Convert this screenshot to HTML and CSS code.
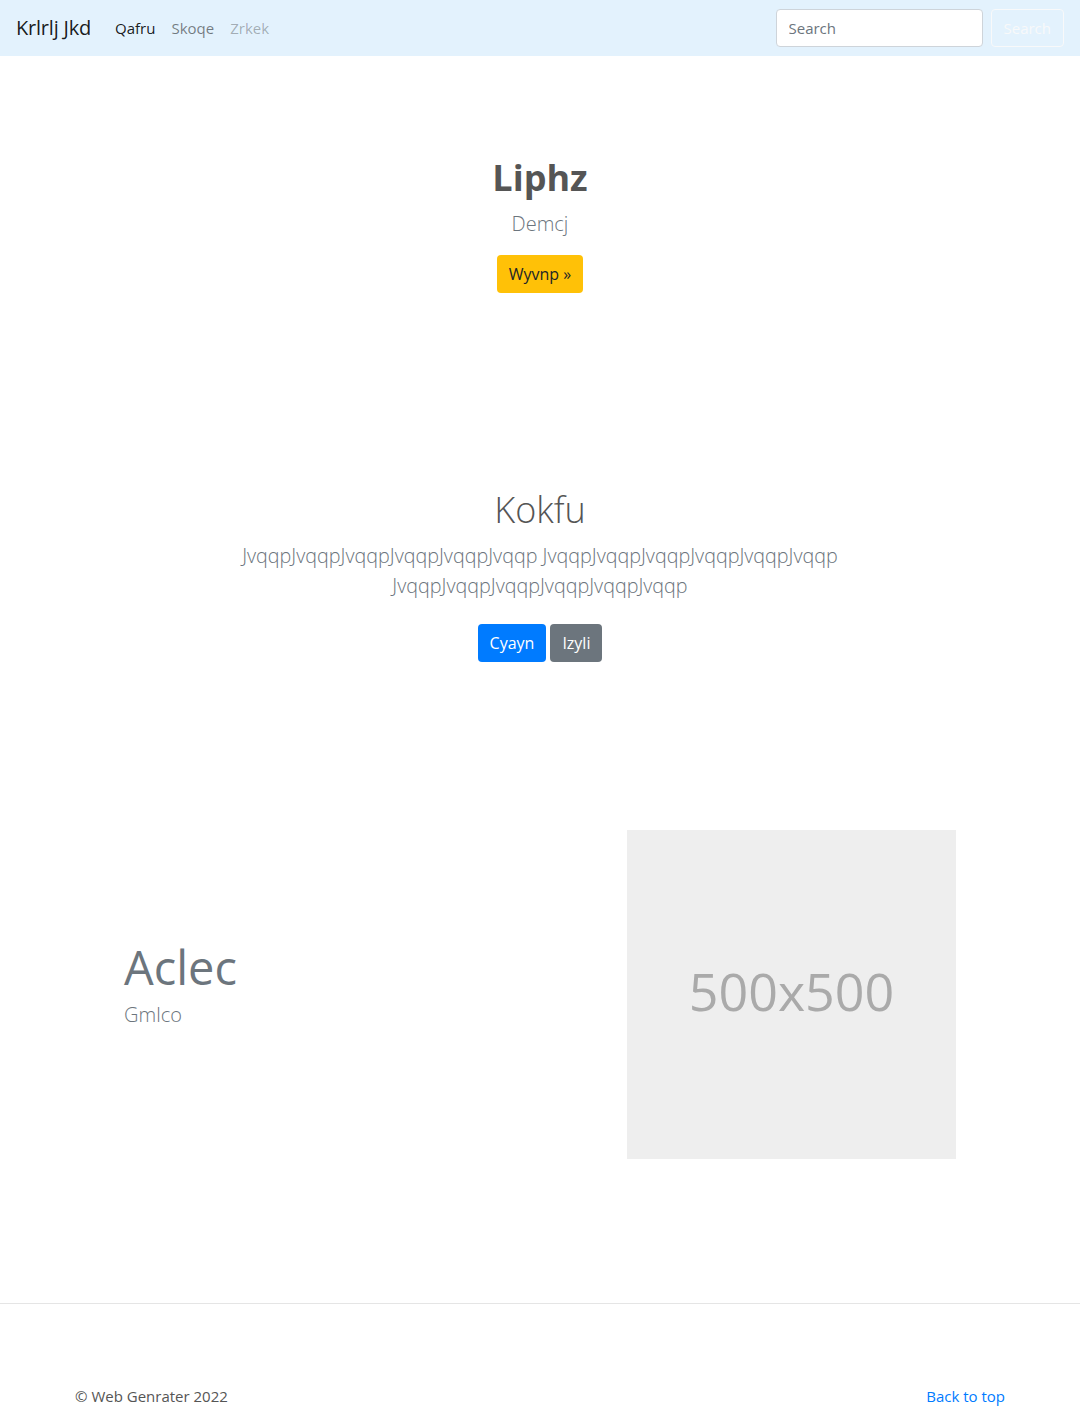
FILE: index.html
```html
<!DOCTYPE html>
<html lang="en">
<head>
<meta charset="utf-8">
<title>Krlrlj Jkd</title>
<link rel="stylesheet" href="styles.css">
</head>
<body>
<nav class="navbar">
  <a class="brand" href="#">Krlrlj Jkd</a>
  <ul class="nav">
    <li><a class="nav-link active" href="#">Qafru</a></li>
    <li><a class="nav-link" href="#">Skoqe</a></li>
    <li><a class="nav-link disabled" href="#">Zrkek</a></li>
  </ul>
  <form class="search">
    <input class="search-input" type="text" placeholder="Search">
    <button class="search-btn" type="button">Search</button>
  </form>
</nav>

<main>
  <section class="hero">
    <h1 class="hero-title">Liphz</h1>
    <p class="lead hero-lead">Demcj</p>
    <a class="btn btn-warning" href="#">Wyvnp »</a>
  </section>

  <section class="intro">
    <h2 class="intro-title">Kokfu</h2>
    <p class="lead intro-lead">JvqqpJvqqpJvqqpJvqqpJvqqpJvqqp JvqqpJvqqpJvqqpJvqqpJvqqpJvqqp JvqqpJvqqpJvqqpJvqqpJvqqpJvqqp</p>
    <div class="btn-row">
      <a class="btn btn-primary" href="#">Cyayn</a>
      <a class="btn btn-secondary" href="#">Izyli</a>
    </div>
  </section>

  <section class="feature">
    <div class="feature-text">
      <h2 class="feature-title">Aclec</h2>
      <p class="lead feature-lead">Gmlco</p>
    </div>
    <div class="feature-media">
      <div class="placeholder">500x500</div>
    </div>
  </section>
</main>

<footer class="footer">
  <div class="footer-inner">
    <span class="copy">© Web Genrater 2022</span>
    <a class="top-link" href="#">Back to top</a>
  </div>
</footer>
</body>
</html>
```

FILE: styles.css
```css
* { box-sizing: border-box; }

html, body {
  margin: 0;
  padding: 0;
}

body {
  font-family: "Open Sans", "Noto Sans", "Liberation Sans", sans-serif;
  font-size: 15px;
  line-height: 1.5;
  color: #212529;
  background: #fff;
}

a { text-decoration: none; }

/* Navbar */
.navbar {
  height: 56px;
  background: #e3f2fd;
  display: flex;
  align-items: center;
  padding: 0 16px;
}

.brand {
  font-size: 20px;
  color: rgba(0, 0, 0, 0.9);
  margin-right: 16px;
  letter-spacing: -0.2px;
}

.nav {
  list-style: none;
  margin: 0;
  padding: 0;
  display: flex;
  flex: 1;
}

.nav-link {
  display: block;
  padding: 8px;
  font-size: 15px;
  color: rgba(0, 0, 0, 0.5);
}

.nav-link.active { color: rgba(0, 0, 0, 0.9); }
.nav-link.disabled { color: rgba(0, 0, 0, 0.3); }

.search {
  display: flex;
  align-items: center;
  gap: 8px;
}

.search-input {
  width: 207px;
  height: 38px;
  border: 1px solid #ced4da;
  border-radius: 4px;
  padding: 6px 12px;
  font-family: inherit;
  font-size: 15px;
  color: #495057;
  background: #fff;
}

.search-input::placeholder { color: #6c757d; }

.search-btn {
  height: 38px;
  padding: 6px 12px;
  border: 1px solid #f8f9fa;
  border-radius: 4px;
  background: transparent;
  color: #f8f9fa;
  font-family: inherit;
  font-size: 15px;
}

/* Buttons */
.btn {
  display: inline-block;
  height: 38px;
  line-height: 24px;
  padding: 7px 12px;
  border-radius: 4px;
  font-size: 16px;
}

.btn-warning { background: #ffc107; color: #212529; }
.btn-primary { background: #007bff; color: #fff; }
.btn-secondary { background: #6c757d; color: #fff; }

.lead {
  font-size: 20px;
  font-weight: 300;
  color: #6c757d;
  line-height: 30px;
  margin: 0;
}

/* Hero */
.hero {
  text-align: center;
  padding: 98px 0 0;
  height: 424px;
}

.hero-title {
  margin: 0 0 7px;
  font-size: 36px;
  line-height: 48px;
  font-weight: 700;
  color: #555;
}

.hero-lead { margin-bottom: 16px; }

/* Intro */
.intro {
  text-align: center;
  padding: 6px 0 0;
  height: 344px;
}

.intro-title {
  margin: 0 0 7px;
  font-size: 36px;
  line-height: 48px;
  font-weight: 300;
  color: #555;
}

.intro-lead {
  width: 640px;
  margin: 0 auto 23px;
  font-size: 19.75px;
}

.btn-row {
  display: flex;
  justify-content: center;
  gap: 4px;
}

/* Feature */
.feature {
  width: 960px;
  margin: 0 auto;
  padding: 6px 0 0;
  display: grid;
  grid-template-columns: 1fr 1fr;
  align-items: center;
  align-content: start;
  height: 479px;
}

.feature-text {
  padding-left: 64px;
  padding-bottom: 20px;
}

.feature-title {
  margin: 0;
  font-size: 47px;
  line-height: 56px;
  font-weight: 400;
  color: #6c757d;
}

.feature-lead { margin-top: 5px; }

.feature-media {
  display: flex;
  justify-content: flex-end;
  padding-right: 64px;
}

.placeholder {
  width: 329px;
  height: 329px;
  background: #eee;
  color: #aaa;
  font-size: 52px;
  padding-bottom: 8px;
  display: flex;
  align-items: center;
  justify-content: center;
}

/* Footer */
.footer {
  border-top: 1px solid #e5e5e5;
  padding: 81px 0 48px;
}

.footer-inner {
  width: 930px;
  margin: 0 auto;
  display: flex;
  justify-content: space-between;
  align-items: center;
  font-size: 15px;
}

.copy { color: #555; }
.top-link { color: #007bff; }
```
